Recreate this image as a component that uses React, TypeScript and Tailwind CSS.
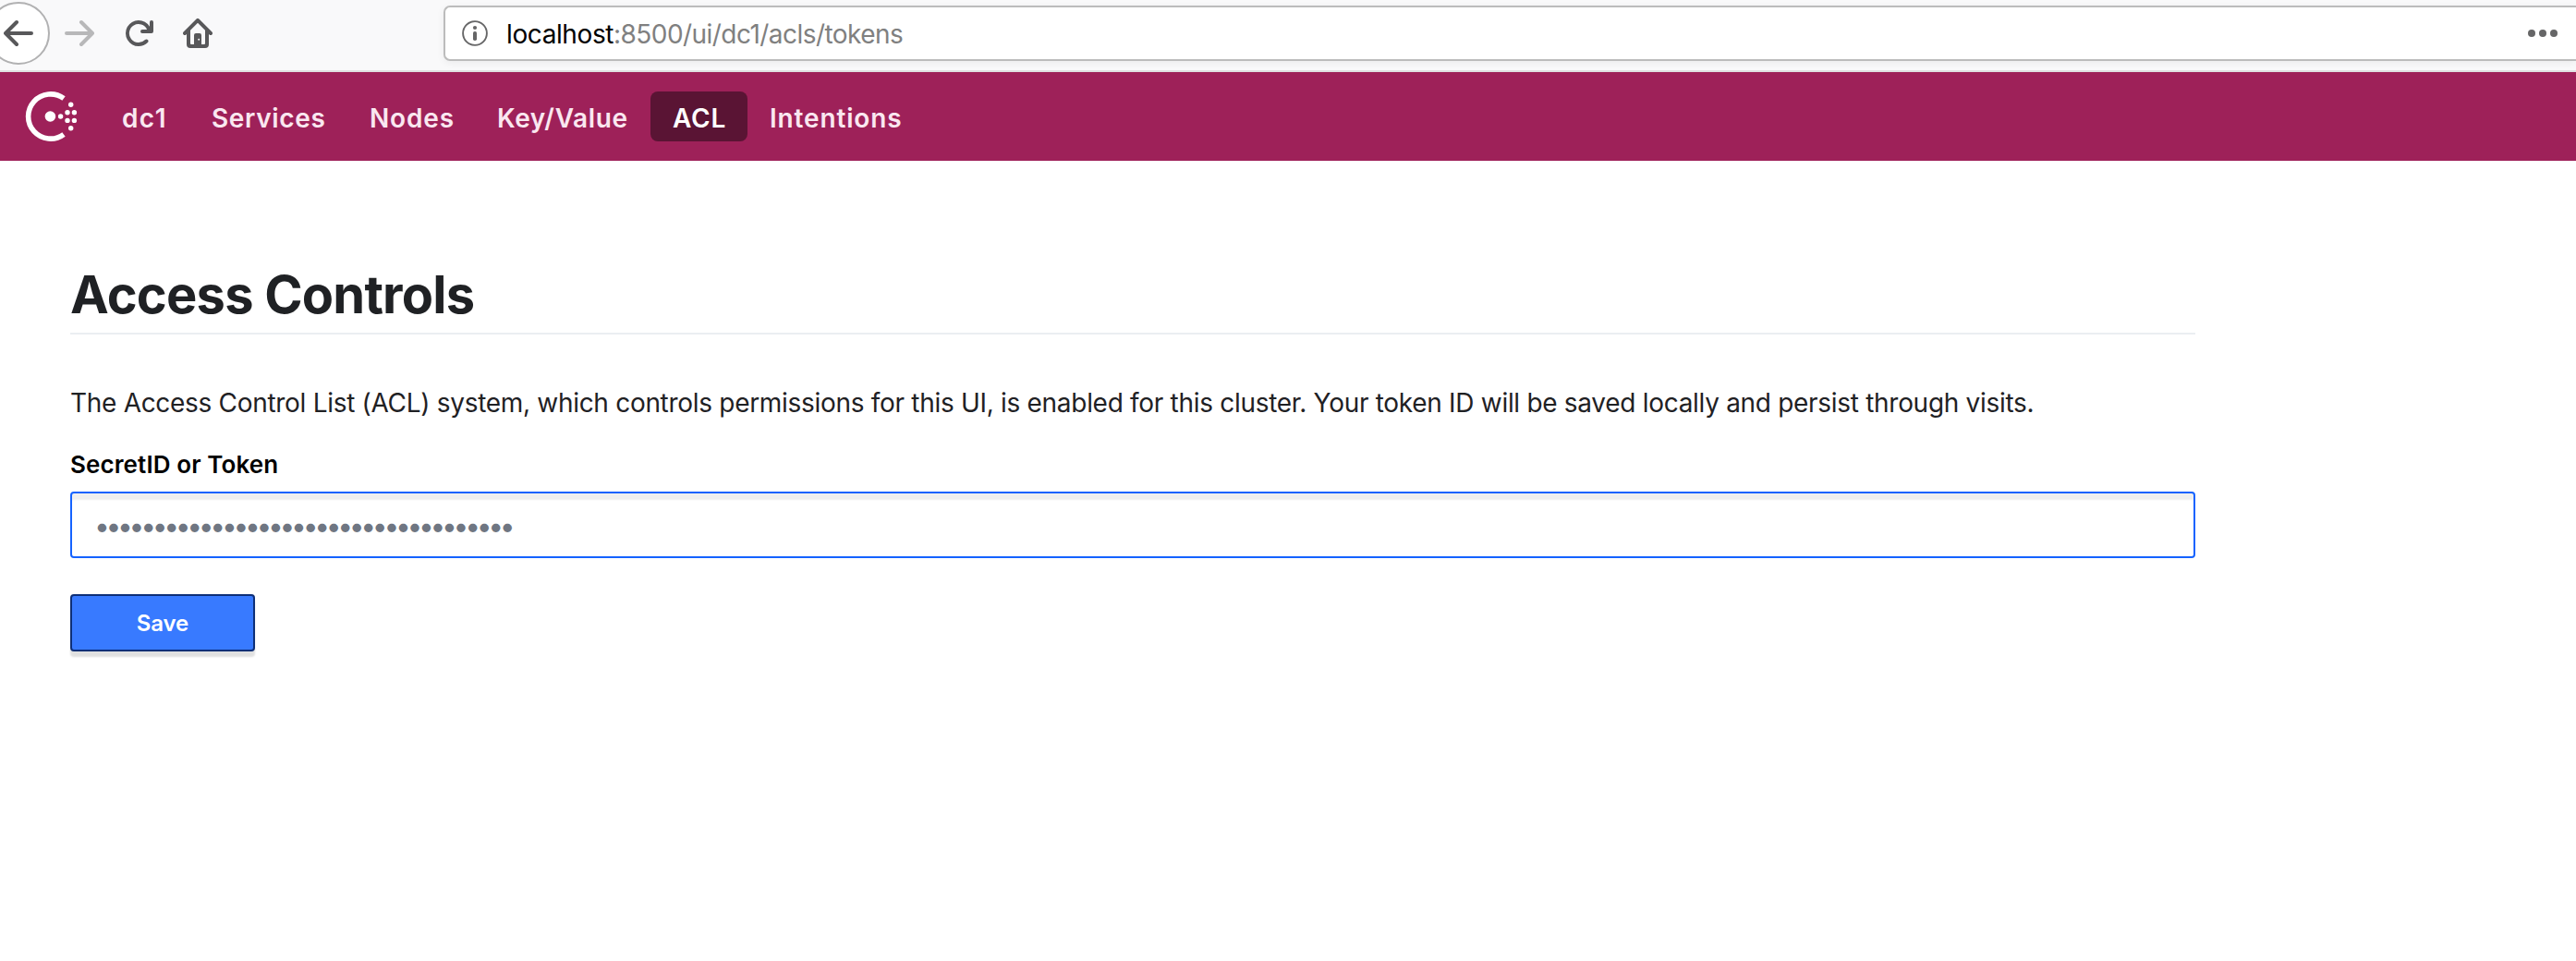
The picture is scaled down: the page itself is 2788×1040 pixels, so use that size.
import React from "react";

const navItems = [
  { label: "dc1", style: "w-[97px] tracking-[1.4px]" },
  { label: "Services", style: "w-[171px] tracking-[0.65px]" },
  { label: "Nodes", style: "w-[138px] tracking-[0.85px]" },
  { label: "Key/Value", style: "w-[190px] tracking-[0.6px]" },
  { label: "ACL", style: "w-[105px] tracking-[0.8px]", active: true },
  { label: "Intentions", style: "w-[192px] tracking-[0.85px]" },
];

function BackIcon() {
  return (
    <svg className="size-8" viewBox="0 0 32 32" fill="none" stroke="#58585a" strokeWidth="4" strokeLinecap="round" strokeLinejoin="round">
      <path d="M2 16H30M14 4L2 16L14 28" />
    </svg>
  );
}

function ForwardIcon() {
  return (
    <svg className="ml-4 size-8" viewBox="0 0 32 32" fill="none" stroke="#b8b8b9" strokeWidth="4" strokeLinecap="round" strokeLinejoin="round">
      <path d="M2 16H30M18 4L30 16L18 28" />
    </svg>
  );
}

function ReloadIcon() {
  return (
    <svg className="ml-8 size-8" viewBox="0 0 16 16" fill="#58585a">
      <path d="M15 1a1 1 0 0 0-1 1v2.418A6.995 6.995 0 1 0 8 15a6.954 6.954 0 0 0 4.95-2.05 1 1 0 0 0-1.414-1.414A5.019 5.019 0 1 1 12.549 6H10a1 1 0 0 0 0 2h5a1 1 0 0 0 1-1V2a1 1 0 0 0-1-1z" />
    </svg>
  );
}

function HomeIcon() {
  return (
    <svg className="ml-8 size-8" viewBox="0 0 16 16" fill="#58585a">
      <path
        fillRule="evenodd"
        d="M15.707 7.293l-7-7a1 1 0 0 0-1.414 0l-7 7a1 1 0 0 0 1.414 1.414L2 8.414V14a2 2 0 0 0 2 2h8a2 2 0 0 0 2-2V8.414l.293.293a1 1 0 0 0 1.414-1.414zM12 13.5a.5.5 0 0 1-.5.5H10V9a1 1 0 0 0-1-1H7a1 1 0 0 0-1 1v5H4.5a.5.5 0 0 1-.5-.5V6.414l4-4 4 4zM8.6 10.9a.5.5 0 1 0 0 1 .5.5 0 0 0 0-1z"
      />
    </svg>
  );
}

function InfoIcon() {
  return (
    <svg className="ml-[18px] size-7" viewBox="0 0 28 28" fill="#666667">
      <circle cx="14" cy="14" r="12.9" fill="none" stroke="#666667" strokeWidth="1.9" />
      <circle cx="14" cy="8" r="2.1" />
      <rect x="12" y="12" width="4" height="10" rx="1.8" />
    </svg>
  );
}

function ConsulLogo() {
  return (
    <svg className="ml-[27px] h-[56px] w-[57px]" viewBox="27 97.6 57 56" fill="#fff">
      <path d="M69 106.2A24.1 24.1 0 1 0 69 145" fill="none" stroke="#fff" strokeWidth="5.6" />
      <circle cx="54.4" cy="125.6" r="5.8" />
      <circle cx="65.6" cy="125.6" r="2.7" />
      <circle cx="73" cy="121.3" r="2.7" />
      <circle cx="80.4" cy="121.3" r="2.7" />
      <circle cx="73" cy="130" r="2.7" />
      <circle cx="80.4" cy="130" r="2.7" />
      <circle cx="76.7" cy="112.9" r="2.7" />
      <circle cx="76.7" cy="138.3" r="2.7" />
    </svg>
  );
}

export default function App() {
  return (
    <div className="min-h-[1040px] w-full overflow-hidden bg-white font-['Inter',sans-serif]">
      <header className="flex h-[78px] items-start border-b-2 border-[#e0e0e1] bg-[#f9f9fa]">
        <div className="flex h-[72px] w-[480px] shrink-0 items-center">
          <div className="-ml-[14px] flex size-[68px] shrink-0 items-center justify-center rounded-full border-2 border-[#b1b1b2] bg-white">
            <BackIcon />
          </div>
          <ForwardIcon />
          <ReloadIcon />
          <HomeIcon />
        </div>
        <div className="mt-1.5 flex h-[60px] flex-1 items-center rounded-l-[7px] border-2 border-r-0 border-[#bcbcbc] bg-white shadow-[0_2px_8px_rgba(0,0,0,0.06)]">
          <InfoIcon />
          <div className="ml-5 pt-0.5 text-[28px] leading-[40px] whitespace-nowrap text-[#808080]">
            <span className="tracking-[-0.4px] text-black">localhost</span>
            <span className="tracking-[-0.55px]">:8500/ui/dc1/acls/tokens</span>
          </div>
          <div className="mr-5 ml-auto flex gap-1">
            <span className="size-2 rounded-full bg-[#666667]" />
            <span className="size-2 rounded-full bg-[#666667]" />
            <span className="size-2 rounded-full bg-[#666667]" />
          </div>
        </div>
      </header>

      <nav className="flex h-24 items-center bg-[#9e2159]">
        <ConsulLogo />
        <ul className="ml-6 flex">
          {navItems.map((item) => (
            <li
              key={item.label}
              className={`h-[54px] rounded-lg pt-0.5 pl-6 text-[28px] leading-[54px] font-semibold whitespace-nowrap ${item.style} ${
                item.active ? "bg-[#5a1434] text-white" : "text-[#fae7f0]"
              }`}
            >
              {item.label}
            </li>
          ))}
        </ul>
      </nav>

      <main className="ml-[76px] w-[2300px] pt-[105px]">
        <h1 className="border-b-2 border-[#ebeef2] pb-px text-[56px] leading-[80px] font-bold tracking-[-0.8px] text-[#1f2124]">
          Access Controls
        </h1>
        <p className="mt-[53px] text-[28px] leading-[42px] tracking-[-0.3px] whitespace-nowrap text-[#1f2124]">
          The Access Control List (ACL) system, which controls permissions for this UI, is enabled for this cluster. Your
          token ID will be saved locally and persist through visits.
        </p>
        <label className="mt-[26px] block text-[26px] leading-[40px] font-semibold tracking-[0.1px] text-black">
          SecretID or Token
        </label>
        <div className="mt-[9px] flex h-[72px] items-center rounded-[4px] border-2 border-[#1563ff] bg-white pt-0.5 pl-[24px] text-[30px] tracking-[-4.339px] text-[#6f7682] shadow-[inset_0_8px_2px_-1px_#efefef]">
          ••••••••••••••••••••••••••••••••••••
        </div>
        <button className="mt-[39px] block h-[62px] w-[200px] rounded-[4px] border-2 border-[#0e2f77] bg-[#387aff] pt-px text-[24px] font-semibold tracking-[-0.1px] text-white shadow-[0_6px_2px_rgba(0,0,0,0.12)]">
          Save
        </button>
      </main>
    </div>
  );
}
